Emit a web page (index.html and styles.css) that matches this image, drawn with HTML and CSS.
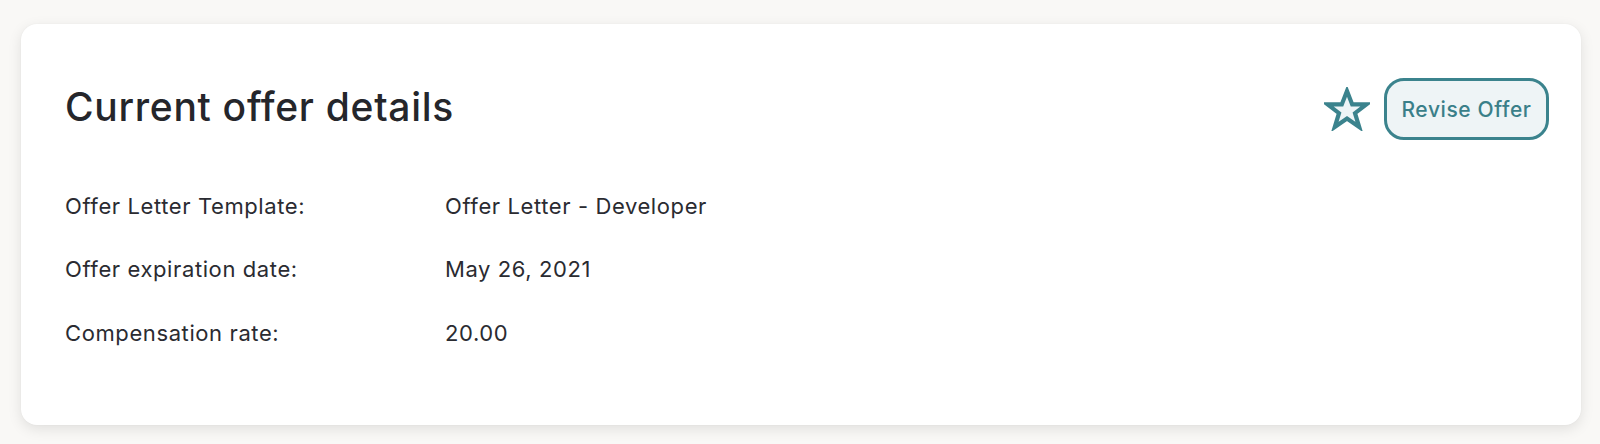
FILE: index.html
```html
<!DOCTYPE html>
<html lang="en">
<head>
<meta charset="utf-8">
<title>Current offer details</title>
<link rel="stylesheet" href="styles.css">
</head>
<body>
<section class="card">
  <header class="card-header">
    <h1 class="card-title">Current offer details</h1>
    <div class="actions">
      <svg class="star" width="46" height="44" viewBox="0 0 46 44" aria-hidden="true">
        <polygon points="23,4 28.2,17.4 42.5,17.4 31,26.2 35.2,40 23,31.6 10.8,40 15,26.2 3.5,17.4 17.8,17.4" fill="#eef5f7" stroke="#3b838d" stroke-width="4.2" stroke-linejoin="miter"/>
      </svg>
      <button class="btn-outline">Revise Offer</button>
    </div>
  </header>
  <dl class="details">
    <div class="row"><dt>Offer Letter Template:</dt><dd>Offer Letter - Developer</dd></div>
    <div class="row"><dt>Offer expiration date:</dt><dd>May 26, 2021</dd></div>
    <div class="row"><dt>Compensation rate:</dt><dd>20.00</dd></div>
  </dl>
</section>
</body>
</html>
```
FILE: styles.css
```css
html, body {
  margin: 0;
  padding: 0;
}
body {
  background: #f9f8f6;
  font-family: Inter, "Liberation Sans", sans-serif;
  color: #2a2b31;
  padding: 24px 19px 0 21px;
  height: 444px;
  box-sizing: border-box;
  overflow: hidden;
}
.card {
  background: #ffffff;
  border-radius: 16px;
  box-shadow: 0 4px 14px rgba(0, 0, 0, 0.10), 0 0 2px rgba(0, 0, 0, 0.04);
  height: 401px;
  box-sizing: border-box;
  padding: 54px 32px 0 44px;
}
.card-header {
  display: flex;
  align-items: center;
  justify-content: space-between;
  height: 62px;
}
.card-title {
  margin: 0;
  font-size: 39px;
  line-height: 46px;
  font-weight: 500;
  color: #25262b;
  letter-spacing: 0.7px;
  position: relative;
  top: -2px;
}
.actions {
  display: flex;
  align-items: center;
  gap: 14px;
}
.star {
  display: block;
}
.btn-outline {
  height: 62px;
  width: 165px;
  box-sizing: border-box;
  border: 3.5px solid #3b838d;
  border-radius: 20px;
  background: #eef4f6;
  color: #3a7f89;
  font-family: Inter, "Liberation Sans", sans-serif;
  font-size: 21px;
  font-weight: 500;
  letter-spacing: 0.6px;
  padding: 0;
  cursor: pointer;
}
.details {
  margin: 0;
  padding-top: 34px;
}
.row {
  display: grid;
  grid-template-columns: 380px 1fr;
  height: 63.5px;
  align-items: center;
  font-size: 22px;
  letter-spacing: 0.6px;
}
.row dt, .row dd {
  margin: 0;
}
```
